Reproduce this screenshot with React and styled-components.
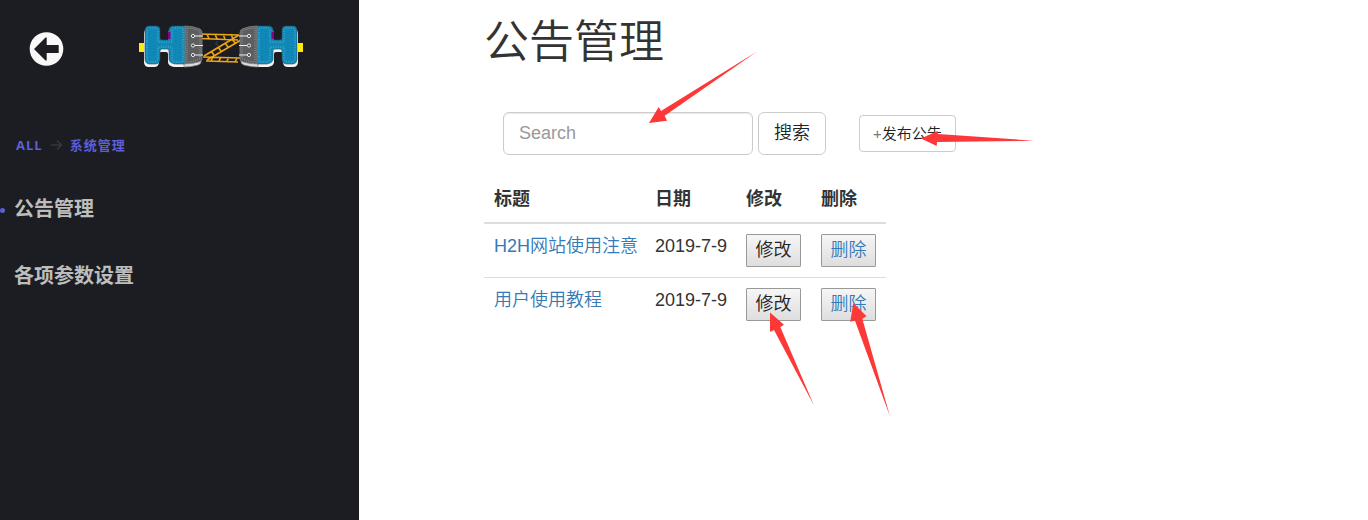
import React from "react";
import styled, { createGlobalStyle } from "styled-components";

const GlobalStyle = createGlobalStyle`
  *, *::before, *::after { box-sizing: border-box; }
  body {
    margin: 0;
    background: #fff;
    color: #333;
    font-family: "Liberation Sans", "Noto Sans CJK SC", sans-serif;
    font-size: 18px;
    line-height: 25px;
  }
`;

const Page = styled.div`
  position: relative;
  display: flex;
  min-height: 100vh;
`;

const Sidebar = styled.aside`
  flex: 0 0 359px;
  background: #1c1d22;
  font-family: "Open Sans", "Noto Sans CJK SC", sans-serif;
  font-weight: 700;
`;

const SidebarHeader = styled.header`
  display: flex;
  align-items: flex-start;
  gap: 74px;
  padding: 24px 28px 0;
`;

const BackButton = styled.button`
  display: block;
  margin-top: 6px;
  padding: 0;
  border: 0;
  background: none;
  cursor: pointer;
  svg { display: block; }
`;

const LogoLink = styled.a`
  display: block;
  svg { display: block; }
`;

const Breadcrumbs = styled.nav`
  display: flex;
  align-items: center;
  gap: 7px;
  padding: 65px 16px 0;
  font-size: 13px;
  line-height: 20px;
  letter-spacing: 1px;
  a { color: #5c5edc; text-decoration: none; }
`;

const Menu = styled.ul`
  list-style: none;
  margin: 0;
  padding: 39px 0 0;
  display: grid;
  gap: 37px;
`;

const MenuItem = styled.li`
  display: flex;
  align-items: center;
  gap: 9px;
  font-size: 20px;
  line-height: 30px;
  &::before {
    content: "";
    width: 5px;
    height: 5px;
    margin-top: 3px;
    border-radius: 50%;
    background: ${(p) => (p.$current ? "#5c5edc" : "transparent")};
  }
  a { color: #bdbdbd; text-decoration: none; }
`;

const Main = styled.main`
  flex: 1;
  min-width: 0;
  padding: 14px 20px 40px 125px;
`;

const Title = styled.h1`
  margin: 0;
  font-size: 45px;
  font-weight: 350;
  line-height: 50px;
  font-family: "Noto Sans CJK SC", sans-serif;
`;

const Toolbar = styled.form`
  display: flex;
  align-items: center;
  margin: 48px 0 22px 19px;
`;

const SearchInput = styled.input`
  width: 250px;
  height: 43px;
  padding: 0 15px;
  border: 1px solid #ccc;
  border-radius: 6px;
  box-shadow: inset 0 1px 1px rgba(0, 0, 0, 0.08);
  font: inherit;
  color: #555;
  &::placeholder { color: #999; opacity: 1; }
`;

const Button = styled.button`
  height: ${(p) => (p.$small ? 37 : 43)}px;
  margin-left: ${(p) => (p.$small ? 33 : 5)}px;
  padding: 0 ${(p) => (p.$small ? 13 : 15)}px;
  border: 1px solid #ccc;
  border-radius: ${(p) => (p.$small ? 4 : 6)}px;
  background: #fff;
  color: #222;
  font: inherit;
  font-size: ${(p) => (p.$small ? 15 : 18)}px;
  font-weight: 350;
  white-space: nowrap;
  cursor: pointer;
`;

const Plus = styled.span`
  color: #777;
`;

const Table = styled.table`
  border-collapse: collapse;
  table-layout: fixed;
  width: 402px;
  white-space: nowrap;
  th, td {
    padding: 10px 0 10px 10px;
    text-align: left;
    vertical-align: top;
  }
  th { border-bottom: 2px solid #ddd; }
  td { font-weight: 350; }
  tbody tr + tr td { border-top: 1px solid #ddd; }
`;

const Col = styled.col`
  width: ${(p) => p.$width}px;
`;

const NoticeLink = styled.a`
  color: #337ab7;
  text-decoration: none;
`;

const RowButton = styled.button`
  display: block;
  width: 55px;
  height: 33px;
  padding: 0;
  border: 1px solid #999;
  border-radius: 1px;
  background: linear-gradient(#f6f6f6, #dedede);
  color: ${(p) => (p.$link ? "#337ab7" : "#222")};
  font: inherit;
  cursor: pointer;
`;

const Annotations = styled.svg`
  position: absolute;
  top: 0;
  left: 0;
  pointer-events: none;
`;

const hPath =
  "M149 26H156Q160 26 160 30V38Q160 40 162 40H168Q169 40 169 38V30Q169 26 174 26H185V64H175Q169 63 169 59V51Q169 49 167 49H162Q160 49 160 51V59Q160 64 155 64H150Q145 64 145 59V31Q145 26 149 26Z";
const cuffPath = "M185 26Q193 26 200 29Q202 30 202 33V59Q202 61 199 62Q192 64 185 64Z";

function LogoHalf() {
  return (
    <g>
      <rect x="139" y="43" width="5" height="9" fill="#ffec00" />
      <g transform="translate(-1 3)">
        <path d={hPath} fill="#f4f4f4" />
        <path d={cuffPath} fill="#ddd" stroke="#888" strokeWidth=".7" />
      </g>
      <rect x="160.5" y="30" width="8" height="10" fill="#1c1d22" />
      <path d={hPath} fill="#1089b8" stroke="#31505c" strokeWidth=".6" />
      <rect x="168" y="32" width="2.5" height="7" fill="#8a008a" />
      <path d={cuffPath} fill="#5d5e5f" stroke="#909192" strokeWidth=".7" />
      <path
        d="M147 31Q147 28 150 28H155Q158 28 158 31V42H172V31Q172 28 175 28H183V62H175Q172 61 172 59V47H158V58Q158 62 155 62H150Q147 62 147 58Z"
        fill="none"
        stroke="#8ed0e5"
        strokeWidth=".6"
        strokeDasharray="1 1.4"
      />
      <path
        d="M187 28V62M188 28Q196 29 200 31V58Q194 62 188 62"
        fill="none"
        stroke="#b5b5b5"
        strokeWidth=".7"
        strokeDasharray="1 1.2"
      />
      <path
        d="M150 31V59M154 33V57M176 31V59M180 29V61"
        fill="none"
        stroke="#0a779f"
        strokeWidth=".7"
        strokeDasharray="1 2"
      />
      {[36, 45.5, 55].map((y) => (
        <g key={y} fill="none" stroke="#eee">
          <path d={`M194.5 ${y}H203`} />
          <circle cx="193" cy={y} r="1.6" fill="#444" />
        </g>
      ))}
    </g>
  );
}

function Logo() {
  return (
    <svg width="167" height="46" viewBox="138 24 167 46" aria-hidden="true">
      <g fill="none" stroke="#eca514" strokeWidth="1.6">
        <path d="M199 34L239 35M200 38.5L238 40M207 34L209 39M215 34L217 39M223 34L225 39M231 34L233 39" />
        <path d="M239 35L204 56M241 40L207 60M232 39L235 43M225 43L228 47M218 47L221 51M211 51L214 55" />
        <path d="M203 57L240 58M206 61L238 62M213 57L211 61M221 57L219 61M229 57L227 61M237 58L235 62" />
      </g>
      <path d="M215 43L218 46M217 41V45" stroke="#423b48" />
      <LogoHalf />
      <g transform="translate(442 0) scale(-1 1)">
        <LogoHalf />
      </g>
    </svg>
  );
}

const notices = [
  { title: "H2H网站使用注意", date: "2019-7-9" },
  { title: "用户使用教程", date: "2019-7-9" },
];

export default function App() {
  return (
    <Page>
      <GlobalStyle />
      <Sidebar>
        <SidebarHeader>
          <BackButton type="button" aria-label="返回">
            <svg width="36" height="38" viewBox="0 0 36 38">
              <circle cx="18.5" cy="19" r="16.8" fill="#f8f8f8" />
              <path d="M6 19L17.5 7.5H18.7V15H30.7V23H18.7V30.5H17.5Z" fill="#1c1d22" />
            </svg>
          </BackButton>
          <LogoLink href="#" aria-label="H2H">
            <Logo />
          </LogoLink>
        </SidebarHeader>
        <Breadcrumbs>
          <a href="#">ALL</a>
          <svg width="13" height="12" viewBox="0 0 13 12" fill="none" stroke="#35373e" strokeWidth="1.5" aria-hidden="true">
            <path d="M1 6H11M7 1.5L11.5 6L7 10.5" />
          </svg>
          <a href="#">系统管理</a>
        </Breadcrumbs>
        <Menu>
          <MenuItem $current>
            <a href="#">公告管理</a>
          </MenuItem>
          <MenuItem>
            <a href="#">各项参数设置</a>
          </MenuItem>
        </Menu>
      </Sidebar>
      <Main>
        <Title>公告管理</Title>
        <Toolbar onSubmit={(e) => e.preventDefault()}>
          <SearchInput type="text" placeholder="Search" aria-label="Search" />
          <Button type="submit">搜索</Button>
          <Button type="button" $small><Plus>+</Plus>发布公告</Button>
        </Toolbar>
        <Table>
          <colgroup>
            <Col $width={161} />
            <Col $width={91} />
            <Col $width={75} />
            <Col $width={75} />
          </colgroup>
          <thead>
            <tr>
              <th>标题</th>
              <th>日期</th>
              <th>修改</th>
              <th>删除</th>
            </tr>
          </thead>
          <tbody>
            {notices.map((n) => (
              <tr key={n.title}>
                <td><NoticeLink href="#">{n.title}</NoticeLink></td>
                <td>{n.date}</td>
                <td><RowButton type="button">修改</RowButton></td>
                <td><RowButton type="button" $link>删除</RowButton></td>
              </tr>
            ))}
          </tbody>
        </Table>
      </Main>
      <Annotations width="1040" height="420" viewBox="0 0 1040 420" fill="#fd3838" aria-hidden="true">
        <path d="M649 123L658.7 107L661 111L757 51.5L664.7 115.7L667 120.7Z" />
        <path d="M921 138.5L937.5 131L938 134L1034 140.7L937 142L936.7 146Z" />
        <path d="M770 312.5L784 324.7L780.3 327L814 405.5L774 330L770 332Z" />
        <path d="M853.3 303L866.5 316.3L862.3 318.7L890 416.5L855 320.7L850.3 321.7Z" />
      </Annotations>
    </Page>
  );
}
